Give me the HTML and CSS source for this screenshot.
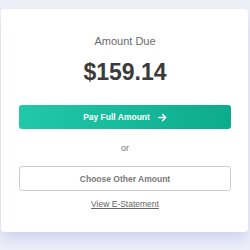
FILE: index.html
```html
<!DOCTYPE html>
<html>
<head>
<meta charset="utf-8">
<link rel="stylesheet" href="styles.css">
</head>
<body>
<div class="card">
  <div class="label">Amount Due</div>
  <div class="amount">$159.14</div>
  <button class="btn-primary">Pay Full Amount
    <svg class="arrow" width="9" height="9" viewBox="0 0 10 10"><path d="M1 5H8.5M5 1.5L8.5 5L5 8.5" fill="none" stroke="#fff" stroke-width="1.6" stroke-linecap="round" stroke-linejoin="round"/></svg>
  </button>
  <div class="or">or</div>
  <button class="btn-secondary">Choose Other Amount</button>
  <a class="link" href="#">View E-Statement</a>
</div>
</body>
</html>
```
FILE: styles.css
```css
html, body {
  margin: 0;
  padding: 0;
}
body {
  background: #eef0f8;
  font-family: "Liberation Sans", Arial, sans-serif;
  height: 250px;
  overflow: hidden;
}
.card {
  box-sizing: border-box;
  margin: 9px 0 0 1px;
  width: 247px;
  height: 223px;
  background: #fff;
  border-radius: 4px;
  box-shadow: 0 8px 14px rgba(170, 182, 228, 0.45);
  padding: 26px 17px 0 18px;
  display: flex;
  flex-direction: column;
  align-items: stretch;
  text-align: center;
}
.label {
  font-size: 11px;
  line-height: 13px;
  color: #6b6b6b;
}
.amount {
  margin-top: 11px;
  font-size: 23px;
  line-height: 26px;
  font-weight: bold;
  color: #3b3b3b;
}
.btn-primary {
  margin-top: 20px;
  height: 24px;
  border: none;
  border-radius: 3px;
  background: linear-gradient(90deg, #20c9a9, #0cab8e);
  color: #fff;
  font-family: inherit;
  font-size: 8.5px;
  font-weight: bold;
  display: flex;
  align-items: center;
  justify-content: center;
  gap: 8px;
  padding: 0;
}
.arrow {
  display: block;
}
.or {
  margin-top: 13px;
  font-size: 9px;
  line-height: 12px;
  color: #777;
}
.btn-secondary {
  margin-top: 12px;
  height: 25px;
  border: 1px solid #cfcfcf;
  border-radius: 3px;
  background: #fff;
  color: #7a7a7a;
  font-family: inherit;
  font-size: 8.5px;
  font-weight: bold;
  padding: 0;
}
.link {
  margin-top: 8px;
  align-self: center;
  font-size: 8.5px;
  line-height: 11px;
  color: #666;
  text-decoration: underline;
}
```
